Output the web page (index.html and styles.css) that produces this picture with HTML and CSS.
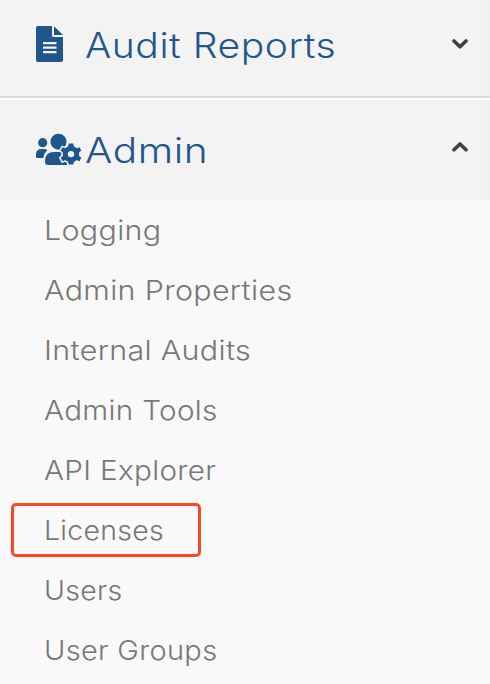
FILE: index.html
```
<!DOCTYPE html>
<html lang="en">
<head>
<meta charset="utf-8">
<title>Admin menu</title>
<link rel="stylesheet" href="styles.css">
</head>
<body>
<nav class="menu">
  <div class="section section-audit">
    <svg class="icon" viewBox="0 0 50 40" aria-hidden="true">
      <path fill-rule="evenodd" d="M1.700 2H16V11.700Q16 13 17.300 13H27V36.300Q27 38 25.300 38H1.700Q0 38 0 36.300V3.700Q0 2 1.700 2ZM7 18V20.200H20.500V18ZM7 22.500V24.700H20.500V22.500ZM7 27V29.200H20.500V27Z"/>
      <path d="M18 2.300L27 11H18Z"/>
    </svg>
    <span class="title"><span class="title-audit">Audit Reports</span></span>
    <svg class="chevron" viewBox="0 0 16 12" aria-hidden="true"><path d="M2 3L8 8.800L14 3"/></svg>
  </div>
  <div class="section section-admin">
    <svg class="icon" viewBox="0 0 50 40" aria-hidden="true">
      <circle cx="6.700" cy="12.700" r="4.600"/>
      <path d="M1 28Q0 28 0 27V24.500Q0 19 5.500 19H8Q10.200 19 11.300 20Q8 23 7.400 28Z"/>
      <circle cx="22.500" cy="11.700" r="8"/>
      <path d="M9 32V31Q9 22 18 22H27L31 30V35H12Q9 35 9 32Z"/>
      <g class="cutout"><use href="#gear"/></g>
      <g id="gear">
        <path d="M32.700 13.500H37.300L38 17.500L40.500 18.600L43.500 17.300L45.300 20.600L42.700 22.900V25.400L45.300 27.800L43.500 31.200L40.500 29.900L38 31L37.300 34.600H32.700L32 31L29.500 29.900L26.500 31.200L24.700 27.800L27.300 25.400V22.900L24.700 20.600L26.500 17.300L29.500 18.600L32 17.500Z"/>
        <circle cx="35" cy="24.100" r="8.200"/>
      </g>
      <circle class="hole" cx="35" cy="24.100" r="3.200"/>
    </svg>
    <span class="title"><span class="title-admin">Admin</span></span>
    <svg class="chevron" viewBox="0 0 16 12" aria-hidden="true"><path d="M2 8.800L8 3L14 8.800"/></svg>
  </div>
  <ul class="items">
    <li><span class="logging">Logging</span></li>
    <li><span class="properties">Admin Properties</span></li>
    <li><span class="audits">Internal Audits</span></li>
    <li><span class="tools">Admin Tools</span></li>
    <li><span class="explorer">API Explorer</span></li>
    <li class="highlighted"><span class="licenses">Licenses</span></li>
    <li><span class="users">Users</span></li>
    <li><span class="groups">User Groups</span></li>
  </ul>
</nav>
</body>
</html>
```
FILE: styles.css
```
* { box-sizing: border-box; }
body {
  margin: 0;
  background: #f9f9f9;
  font-family: Inter, "Open Sans", sans-serif;
  font-weight: 300;
}
.menu { height: 684px; overflow: hidden; }
.section {
  display: flex;
  align-items: center;
  height: 100px;
  padding: 0 22px 0 36px;
  color: #1f568b;
  background: linear-gradient(90deg, #f3f3f3 480px, #f0f0f0 490px);
}
.section-audit {
  height: 98px;
  margin-bottom: 2px;
  padding-bottom: 8px;
  border-bottom: 2px solid #dcdcdc;
  box-shadow: 0 2px #fff;
}
.icon { width: 50px; height: 40px; flex: none; fill: #1f568b; }
.cutout { fill: #f3f3f3; stroke: #f3f3f3; stroke-width: 3px; }
.hole { fill: #f3f3f3; }
.title {
  flex: 1;
  margin-left: -1px;
  font-size: 35px;
  line-height: 48px;
  letter-spacing: 0.500px;
  white-space: nowrap;
}
.section-audit .title { padding-top: 2px; }
.title span, .items span { display: inline-block; transform-origin: left center; }
.title-audit { transform: scaleX(1.115); }
.title-admin { transform: scaleX(1.160); }
.chevron {
  width: 16px;
  height: 12px;
  flex: none;
  fill: none;
  stroke: #404040;
  stroke-width: 3.600;
  stroke-linecap: round;
  stroke-linejoin: round;
}
.section-admin .chevron { margin-bottom: 6px; }
.items { margin: 0; padding: 0; list-style: none; }
.items li {
  display: flex;
  align-items: center;
  height: 60px;
  padding-left: 44px;
  color: #777;
  font-size: 27.500px;
  letter-spacing: 0.300px;
  white-space: nowrap;
}
.logging, .properties, .audits { transform: scaleX(1.106); }
.tools, .explorer { transform: scaleX(1.078); }
.licenses, .users { transform: scaleX(1.034); }
.groups { transform: scaleX(1.055); }
.items .highlighted {
  width: 190px;
  height: 54px;
  margin: 3px 0 3px 11px;
  padding-left: 30px;
  border: 3px solid #f94828;
  border-radius: 5px;
}
```
